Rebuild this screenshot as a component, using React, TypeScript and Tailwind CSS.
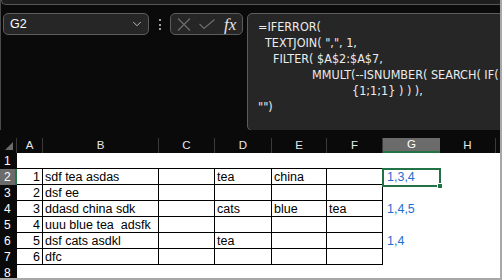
import { ChevronDown } from "lucide-react";

type Col = { key: string; w: string };

const cols: Col[] = [
  { key: "A", w: "w-[26px]" },
  { key: "B", w: "w-[116px]" },
  { key: "C", w: "w-[56px]" },
  { key: "D", w: "w-[57px]" },
  { key: "E", w: "w-[55px]" },
  { key: "F", w: "w-[56px]" },
  { key: "G", w: "w-[57px]" },
  { key: "H", w: "w-[56px]" },
];

// row number -> cells by column letter
const data: Record<number, Record<string, string>> = {
  2: { A: "1", B: "sdf tea asdas", D: "tea", E: "china", G: "1,3,4" },
  3: { A: "2", B: "dsf ee" },
  4: { A: "3", B: "ddasd china sdk", D: "cats", E: "blue", F: "tea", G: "1,4,5" },
  5: { A: "4", B: "uuu blue tea  adsfk" },
  6: { A: "5", B: "dsf cats asdkl", D: "tea", G: "1,4" },
  7: { A: "6", B: "dfc" },
};

const formula = [
  { pad: "pl-[10px]", text: "=IFERROR(" },
  { pad: "pl-[17px]", text: 'TEXTJOIN( ",", 1,' },
  { pad: "pl-[25px]", text: "FILTER( $A$2:$A$7," },
  { pad: "pl-[64px]", text: "MMULT(--ISNUMBER( SEARCH( IF( IS" },
  { pad: "pl-[104px]", text: "{1;1;1} ) ) )," },
  { pad: "pl-[10px]", text: '"")' },
];

const tableCols = ["A", "B", "C", "D", "E", "F"];

function Cell({ col, row }: { col: Col; row: number }) {
  const value = data[row]?.[col.key] ?? "";
  const inTable = tableCols.includes(col.key) && row >= 2 && row <= 7;
  const topEdge = tableCols.includes(col.key) && row === 1;
  const isNum = col.key === "A";
  const isResult = col.key === "G";

  let cls = `${col.w} h-full shrink-0 overflow-visible whitespace-pre leading-[15px] pt-[1px]`;
  if (inTable) cls += " border-r border-b border-black";
  if (topEdge) cls += " border-b border-black";
  if (isNum) cls += " text-right pr-[2px]";
  else if (isResult) cls += " pl-[4px] text-[#1f6fd0]";
  else cls += " pl-[2px]";

  return <div className={cls}>{value}</div>;
}

export default function App() {
  const rows = [1, 2, 3, 4, 5, 6, 7, 8];

  return (
    <div className="relative h-[280px] w-[502px] overflow-hidden border-r-2 border-b-2 border-[#a8a8a8] bg-[#0a0a0a] font-['Liberation_Sans',sans-serif]">
      {/* top chrome */}
      <div className="border-l border-[#4a4a4a]">
        <div className="h-[5px] rounded-bl-[6px] border-b border-l border-[#555] bg-[#1e1e1e]" />

        <div className="flex h-[125px] items-start overflow-hidden pt-[8px]">
          <div className="ml-[2px] flex h-[22px] w-[146px] shrink-0 items-center justify-between rounded-[5px] border border-[#5c5c5c] bg-[#262626] pl-[6px] pr-[4px] text-[12.5px] text-white">
            <span>G2</span>
            <ChevronDown size={14} strokeWidth={1.5} className="text-[#cfcfcf]" />
          </div>

          <div className="flex w-[21px] shrink-0 flex-col items-center gap-[2.5px] pt-[6px]">
            <span className="h-[2px] w-[2px] bg-[#a0a0a0]" />
            <span className="h-[2px] w-[2px] bg-[#a0a0a0]" />
            <span className="h-[2px] w-[2px] bg-[#a0a0a0]" />
          </div>

          <div className="flex h-[22px] w-[73px] shrink-0 items-center rounded-[5px] border border-[#5c5c5c] bg-[#262626] pl-[6px]">
            <svg width="14" height="13" viewBox="0 0 14 13" className="text-[#6f6f6f]">
              <path d="M1 0.5 L13 12.5 M13 0.5 L1 12.5" stroke="currentColor" strokeWidth="1.1" fill="none" />
            </svg>
            <svg width="16" height="10" viewBox="0 0 16 10" className="ml-[8px] text-[#6f6f6f]">
              <path d="M0.5 5 L5 9.5 L15.5 0.5" stroke="currentColor" strokeWidth="1.1" fill="none" />
            </svg>
            <span className="ml-[9px] font-['Liberation_Serif',serif] text-[17px] leading-none italic text-[#e6e6e6]">
              fx
            </span>
          </div>

          <div className="ml-[4px] h-[118px] w-[270px] shrink-0 overflow-hidden rounded-[5px] border border-[#5c5c5c] bg-[#262626] pt-[5px] font-['Liberation_Sans_Narrow','DejaVu_Sans_Condensed','Liberation_Sans',sans-serif] text-[12.5px] leading-[16px] text-[#ececec]">
            {formula.map((line, i) => (
              <div key={i} className={`${line.pad} whitespace-pre`}>
                {line.text}
              </div>
            ))}
          </div>
        </div>
      </div>

      {/* column header */}
      <div className="mt-[8px] flex h-[15px] text-[11.5px] leading-[15px] text-[#e8e8e8]">
        <div className="relative w-[17px] shrink-0 border-r border-[#3a3a3a]">
          <svg width="8" height="8" viewBox="0 0 8 8" className="absolute left-[5px] top-[4px]">
            <path d="M8 0 L8 8 L0 8 Z" fill="#6a6a6a" />
          </svg>
        </div>
        {cols.map((c) =>
          c.key === "G" ? (
            <div
              key={c.key}
              className={`${c.w} shrink-0 border-b-2 border-[#217346] bg-[#6b6b6b] text-center leading-[13px] text-white`}
            >
              {c.key}
            </div>
          ) : (
            <div key={c.key} className={`${c.w} shrink-0 border-r border-[#3a3a3a] text-center`}>
              {c.key}
            </div>
          )
        )}
        <div className="flex-1" />
      </div>

      {/* grid */}
      <div className="relative text-[12.5px] text-black">
        {rows.map((r) => (
          <div key={r} className={`flex ${r === 8 ? "h-[13px]" : "h-[16px]"}`}>
            <div
              className={`w-[17px] shrink-0 pl-[4px] text-[12px] leading-[16px] text-white ${
                r === 2 ? "border-r-2 border-[#217346] bg-[#6b6b6b]" : "bg-[#0a0a0a]"
              }`}
            >
              {r}
            </div>
            <div className="flex flex-1 bg-white">
              {cols.map((c) => (
                <Cell key={c.key} col={c} row={r} />
              ))}
              <div className="flex-1" />
            </div>
          </div>
        ))}

        {/* active cell selection on G2 */}
        <div className="absolute left-[382px] top-[15px] h-[19px] w-[59px] border-2 border-[#217346]" />
        <div className="absolute left-[437px] top-[30px] h-[6px] w-[6px] border border-white bg-[#217346]" />
      </div>
    </div>
  );
}
